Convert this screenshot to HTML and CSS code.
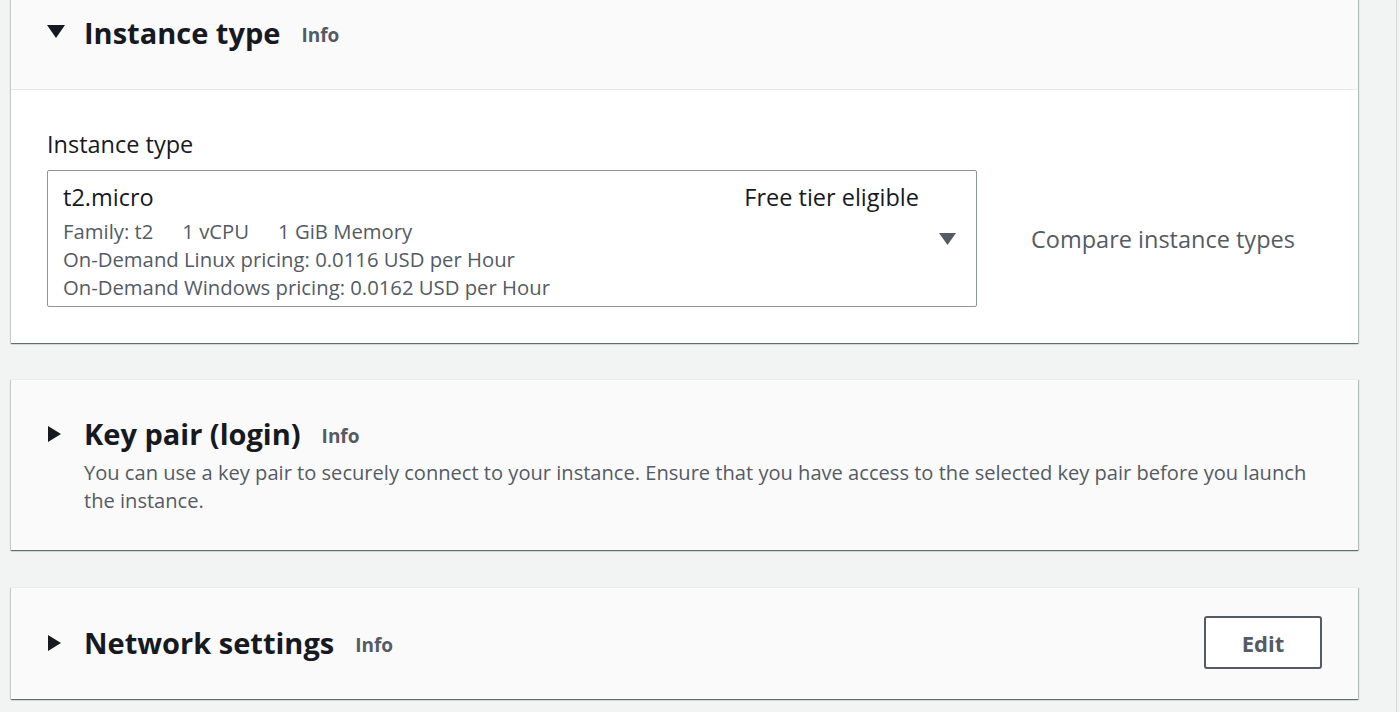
FILE: index.html
```html
<!DOCTYPE html>
<html lang="en">
<head>
<meta charset="utf-8">
<title>Launch instance</title>
<link rel="stylesheet" href="styles.css">
</head>
<body>
<div class="page">
  <div class="column">
    <section class="card card-first">
      <div class="card-header">
        <svg class="caret-down" width="18" height="13" viewBox="0 0 18 13"><path d="M0 0 H18 L9 13 Z" fill="#16191f"/></svg>
        <h2 class="title">Instance type</h2>
        <span class="info">Info</span>
      </div>
      <div class="card-body">
        <div class="label">Instance type</div>
        <div class="field-row">
          <div class="select">
            <div class="select-main">
              <div class="select-name">t2.micro</div>
              <div class="select-meta"><span>Family: t2</span><span>1 vCPU</span><span>1 GiB Memory</span></div>
              <div class="select-meta">On-Demand Linux pricing: 0.0116 USD per Hour</div>
              <div class="select-meta">On-Demand Windows pricing: 0.0162 USD per Hour</div>
            </div>
            <div class="select-tag">Free tier eligible</div>
            <div class="select-caret">
              <svg width="17" height="12" viewBox="0 0 17 12"><path d="M0 0 H17 L8.5 12 Z" fill="#545b64"/></svg>
            </div>
          </div>
          <a class="compare">Compare instance types</a>
        </div>
      </div>
    </section>

    <section class="card card-collapsed card-key">
      <div class="head-row">
        <svg class="caret-right" width="13" height="16" viewBox="0 0 13 16"><path d="M0 0 L13 8 L0 16 Z" fill="#16191f"/></svg>
        <h2 class="title">Key pair (login)</h2>
        <span class="info">Info</span>
      </div>
      <p class="desc">You can use a key pair to securely connect to your instance. Ensure that you have access to the selected key pair before you launch the instance.</p>
    </section>

    <section class="card card-collapsed card-net">
      <div class="head-row">
        <svg class="caret-right" width="13" height="16" viewBox="0 0 13 16"><path d="M0 0 L13 8 L0 16 Z" fill="#16191f"/></svg>
        <h2 class="title">Network settings</h2>
        <span class="info">Info</span>
        <button class="edit">Edit</button>
      </div>
    </section>
  </div>
</div>
</body>
</html>
```

FILE: styles.css
```css
* { box-sizing: border-box; }
html, body { margin: 0; padding: 0; }
body {
  background: #f2f3f3;
  font-family: "Open Sans", "Liberation Sans", Arial, sans-serif;
  color: #16191f;
  overflow: hidden;
  height: 712px;
}
.page {
  width: 1397px;
  height: 712px;
  border-right: 1px solid #d5d8d8;
}
.column {
  width: 1347px;
  margin-left: 11px;
  display: flex;
  flex-direction: column;
}
.card {
  background: #fafafa;
  border-top: 1px solid #eaeded;
  box-shadow: 0 1px 1px 0 rgba(0, 28, 36, 0.45), 1px 1px 1px 0 rgba(0, 28, 36, 0.2), -1px 1px 1px 0 rgba(0, 28, 36, 0.12);
}
.card-first {
  margin-top: -24px;
  border-top: none;
}
.card-header {
  height: 114px;
  display: flex;
  align-items: center;
  padding-left: 36px;
  border-bottom: 1px solid #e6e9e9;
}
.caret-down { margin-right: 19px; margin-top: -2px; }
.caret-right { margin-left: 1px; margin-right: 23px; }
.title {
  margin: 0;
  font-size: 29px;
  font-weight: 700;
  line-height: 40px;
}
.info {
  margin-left: 21px;
  font-size: 19px;
  font-weight: 700;
  color: #545b64;
  margin-top: 4px;
}
.card-body {
  background: #ffffff;
  padding: 39px 36px 36px 36px;
}
.label {
  font-size: 23.5px;
  line-height: 30px;
  margin-bottom: 11px;
}
.field-row {
  display: flex;
  align-items: center;
}
.select {
  width: 930px;
  height: 137px;
  border: 1px solid #8d9596;
  border-radius: 2px;
  display: flex;
  padding: 11px 0 5px 15px;
}
.select-main { flex: 1; }
.select-name {
  font-size: 23.5px;
  line-height: 30px;
  margin-bottom: 5px;
}
.select-meta {
  font-size: 20.3px;
  line-height: 28px;
  color: #545b64;
}
.select-meta span + span { margin-left: 29px; }
.select-tag {
  font-size: 23.5px;
  line-height: 30px;
}
.select-caret {
  display: flex;
  align-items: center;
  padding: 0 20px 0 20px;
  margin-top: -6px;
}
.compare {
  margin-left: 54px;
  font-size: 23.5px;
  color: #545b64;
}
.card-key {
  margin-top: 36px;
  padding: 34px 36px 35px 36px;
}
.head-row {
  display: flex;
  align-items: center;
}
.desc {
  margin: 5px 0 0 37px;
  font-size: 20.1px;
  line-height: 28px;
  color: #545b64;
}
.card-net {
  margin-top: 37px;
  padding: 28px 36px 30px 36px;
}
.edit {
  margin-left: auto;
  width: 118px;
  height: 53px;
  background: #ffffff;
  border: 2px solid #545b64;
  border-radius: 3px;
  font-family: inherit;
  font-size: 22px;
  font-weight: 700;
  color: #545b64;
}
```
